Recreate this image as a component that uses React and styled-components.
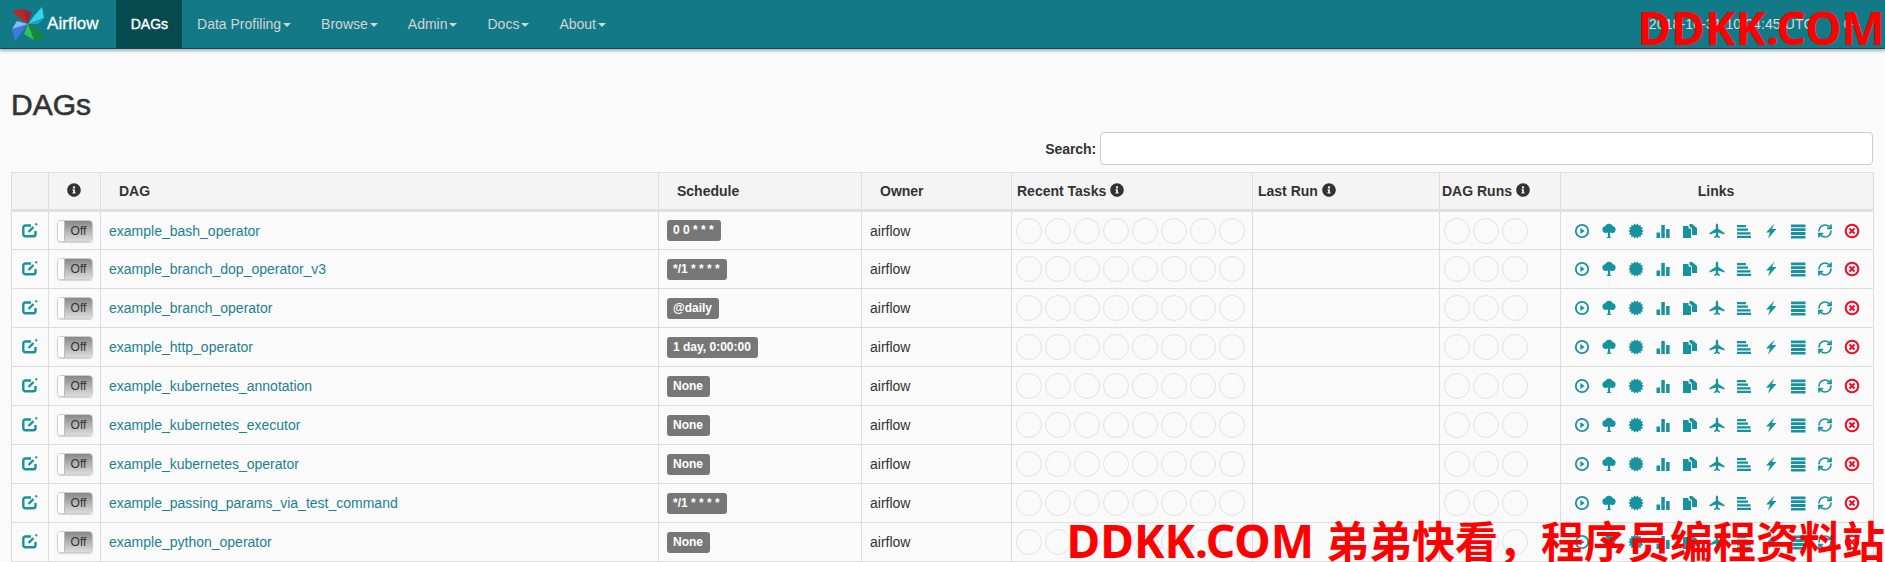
import React from 'react';
import styled, { createGlobalStyle } from 'styled-components';
import { FaInfoCircle } from 'react-icons/fa';
import { RefreshCw } from 'lucide-react';

const GlobalStyle = createGlobalStyle`
  html, body {
    margin: 0;
    height: 562px;
    overflow: hidden;
    background: #fafafa;
    font-family: "Liberation Sans", Arial, sans-serif;
    font-size: 14px;
    color: #333;
  }
`;

const Navbar = styled.nav`
  height: 48px;
  display: flex;
  align-items: stretch;
  background: #127a87;
  border-bottom: 1px solid #0d4f57;
  box-shadow: 0 2px 3px rgba(0, 0, 0, 0.3);
`;
const Brand = styled.a`
  display: flex;
  align-items: center;
  gap: 2px;
  padding: 0 17px 0 12px;
  color: #fff;
  font-size: 17px;
  letter-spacing: 0.1px;
  -webkit-text-stroke: 0.3px #fff;
`;
const NavItem = styled.a`
  display: flex;
  align-items: center;
  padding: 0 ${props => props.active ? 14 : 15}px 0 15px;
  color: ${props => props.active ? '#fff' : '#d4d4d4'};
  background: ${props => props.active ? '#06494f' : 'transparent'};
  -webkit-text-stroke: ${props => props.active ? '0.4px #fff' : '0'};
`;
const Caret = styled.span`
  width: 0;
  height: 0;
  margin-left: 2px;
  margin-top: 1px;
  border-top: 4px solid #d4d4d4;
  border-left: 4px solid transparent;
  border-right: 4px solid transparent;
`;
const Clock = styled.div`
  margin-left: auto;
  padding-right: 25px;
  display: flex;
  align-items: center;
  gap: 30px;
  color: #dcdcdc;
  font-size: 14px;
  letter-spacing: 0.1px;
`;

const Page = styled.main`
  padding: 0 12px 0 11px;
`;
const Title = styled.h2`
  margin: 39px 0 0;
  height: 44px;
  line-height: 33px;
  font-size: 30px;
  font-weight: normal;
  color: #333;
  -webkit-text-stroke: 0.6px #333;
`;
const SearchRow = styled.div`
  display: flex;
  justify-content: flex-end;
  align-items: center;
  gap: 4px;
  height: 33px;
  margin-bottom: 7px;
`;
const SearchLabel = styled.label`
  font-weight: bold;
  font-size: 14px;
  letter-spacing: -0.1px;
`;
const SearchInput = styled.input`
  box-sizing: border-box;
  width: 773px;
  height: 33px;
  background: #fff;
  border: 1px solid #ccc;
  border-radius: 4px;
`;

const Table = styled.table`
  width: 1862px;
  table-layout: fixed;
  border-collapse: collapse;
`;
const Th = styled.th`
  box-sizing: border-box;
  height: 38px;
  padding: 0 ${props => props.center ? 2 : 0}px 0 ${props => props.pad || 0}px;
  background: #f4f4f4;
  border: 1px solid #ddd;
  border-bottom: 3px solid #e0e0e0;
  text-align: ${props => props.center ? 'center' : 'left'};
  font-size: 14px;
  font-weight: bold;
  color: #333;
`;
const HeadInfo = styled(FaInfoCircle)`
  vertical-align: -1px;
  margin-left: ${props => props.alone ? 0 : 4}px;
  font-size: 14px;
`;
const Tr = styled.tr`
  height: 39px;
`;
const Td = styled.td`
  box-sizing: border-box;
  padding: 0 0 0 ${props => props.pad || 8}px;
  border: 1px solid #ddd;
  background: #fafafa;
  white-space: nowrap;
`;
const DagLink = styled.a`
  color: #1a8290;
`;
const Badge = styled.span`
  display: inline-block;
  padding: 0 7px 0 6px;
  height: 21px;
  line-height: 21px;
  background: #777;
  border-radius: 3px;
  color: #fff;
  font-size: 12px;
  font-weight: bold;
  white-space: pre;
`;
const Toggle = styled.span`
  box-sizing: border-box;
  display: flex;
  width: 36px;
  height: 22px;
  border: 1px solid #ccc;
  border-radius: 4px;
  overflow: hidden;
  font-size: 12px;
  box-shadow: 0 1px 1px rgba(0, 0, 0, 0.15);
`;
const ToggleHandle = styled.span`
  width: 6px;
  background: #fff;
  border-right: 1px solid #bbb;
`;
const ToggleLabel = styled.span`
  flex: 1;
  text-align: center;
  line-height: 20px;
  color: #333;
  background: linear-gradient(#888, #dcdcdc);
`;
const Circles = styled.div`
  display: flex;
  gap: 3px;
`;
const Circle = styled.span`
  box-sizing: border-box;
  width: 26px;
  height: 26px;
  border: 1.5px solid #e2e2e2;
  border-radius: 50%;
`;
const Links = styled.div`
  display: flex;
  gap: 11px;
  padding-left: 1px;
  color: #17929f;
`;
const Glyph = styled.svg`
  display: block;
  flex: none;
  width: 16px;
  height: 16px;
  fill: currentColor;
  color: ${props => props.danger ? '#f10a22' : 'inherit'};
`;
const Refresh = styled(RefreshCw)`
  display: block;
  flex: none;
`;
const EditIcon = styled.svg`
  display: block;
  width: 16px;
  height: 16px;
  margin: -2px 0 0 9px;
  fill: none;
  stroke: #17929f;
  stroke-width: 2.4;
`;

const Watermark = styled.div`
  position: absolute;
  color: #ff0000;
  font-family: "Noto Sans", "Noto Sans CJK SC", sans-serif;
  font-weight: bold;
  font-size: 46px;
  line-height: 1;
  white-space: nowrap;
  right: ${props => props.right}px;
  top: ${props => props.top}px;
`;
const WatermarkCjk = styled.span`
  font-size: 43px;
`;

// little spiky disc used by the graph link
const spikes = () => {
  const pts = [];
  for (let i = 0; i < 28; i++) {
    const r = i % 2 ? 6 : 7.8;
    const a = (i / 28) * Math.PI * 2;
    pts.push(`${(8 + r * Math.cos(a)).toFixed(2)},${(8 + r * Math.sin(a)).toFixed(2)}`);
  }
  return pts.join(' ');
};

const Logo = () => (
  <svg width="33" height="34" viewBox="0 0 33 34">
    <polygon points="0,4 10,2 16,17 9,12" fill="#c8231c" />
    <polygon points="10,2 20,5 16,17" fill="#8e2a3a" />
    <polygon points="30,0 32,11 16,17 22,9" fill="#34d3ee" />
    <polygon points="32,11 26,17 16,17" fill="#19a7c4" />
    <polygon points="33,31 22,33 16,17 24,21" fill="#128a3a" />
    <polygon points="22,33 12,27 16,17" fill="#2fc356" />
    <polygon points="3,34 0,22 16,17 10,25" fill="#3f78e0" />
    <polygon points="0,22 5,14 16,17" fill="#8db8f5" />
  </svg>
);

const LinkIcons = () => (
  <Links>
    <Glyph viewBox="0 0 16 16">
      <circle cx="8" cy="8" r="6.2" fill="none" stroke="currentColor" strokeWidth="1.8" />
      <path d="M6.4 5l4.2 3-4.2 3z" />
    </Glyph>
    <Glyph viewBox="0 0 16 16">
      <circle cx="8" cy="5" r="4.2" />
      <circle cx="4.8" cy="6.6" r="3.4" />
      <circle cx="11.2" cy="6.6" r="3.4" />
      <path d="M6.900 8h2.200v5.500l1.400 1.500h-5l1.400-1.500z" />
    </Glyph>
    <Glyph viewBox="0 0 16 16">
      <polygon points={spikes()} />
    </Glyph>
    <Glyph viewBox="0 0 16 16">
      <path d="M1.500 9.500h3.500V15H1.500zM6.300 2h3.500v13H6.300zM11.100 6h3.500v9h-3.500z" />
    </Glyph>
    <Glyph viewBox="0 0 16 16">
      <path d="M1 3h5.500v2.500H9V15H1zM10 1l5 4v7h-5V5.500L7.500 3.500V1z" />
      <path d="M7.200 3.800l1.500 1.400H7.200z" fill="#fff" />
    </Glyph>
    <Glyph viewBox="0 0 16 16">
      <path d="M8 .5c.8 0 1.200 1.200 1.200 2.500v2.700L15.500 10v1.500L9.200 9.500v3l1.800 1.500v1L8 14.300 5 15v-1l1.800-1.500v-3L.5 11.500V10l6.300-4.300V3C6.800 1.700 7.200.5 8 .5z" />
    </Glyph>
    <Glyph viewBox="0 0 16 16">
      <path d="M1 2h9v2.200H1zM1 5.600h11v2.200H1zM1 9.200h13.500v2.200H1zM1 12.800h14v2.200H1z" />
    </Glyph>
    <Glyph viewBox="0 0 16 16">
      <path d="M11.500.5L3 9.500h4L5 15.500l8.500-9.500H9z" />
    </Glyph>
    <Glyph viewBox="0 0 16 16">
      <path d="M1 1.500h14.500v2.800H1zM1 5.300h14.500v2.800H1zM1 9.100h14.500v2.800H1zM1 12.900h14.500v2.600H1z" />
    </Glyph>
    <Refresh size={16} strokeWidth={2.5} />
    <Glyph viewBox="0 0 16 16" danger="true">
      <circle cx="8" cy="8" r="6.300" fill="none" stroke="currentColor" strokeWidth="2" />
      <path d="M5.500 5.500l5 5M10.500 5.500l-5 5" stroke="currentColor" strokeWidth="1.900" fill="none" />
    </Glyph>
  </Links>
);

const DAGS = [
  ['example_bash_operator', '0 0 * * *'],
  ['example_branch_dop_operator_v3', '*/1 * * * *'],
  ['example_branch_operator', '@daily'],
  ['example_http_operator', '1 day, 0:00:00'],
  ['example_kubernetes_annotation', 'None'],
  ['example_kubernetes_executor', 'None'],
  ['example_kubernetes_operator', 'None'],
  ['example_passing_params_via_test_command', '*/1 * * * *'],
  ['example_python_operator', 'None'],
];

const NAV = ['Data Profiling', 'Browse', 'Admin', 'Docs', 'About'];
const COLS = [37, 52, 558, 203, 150, 241, 187, 121, 313];

const App = () => (
  <>
    <GlobalStyle />
    <Navbar>
      <Brand><Logo />Airflow</Brand>
      <NavItem active="true">DAGs</NavItem>
      {NAV.map(name => (
        <NavItem key={name}>{name}<Caret /></NavItem>
      ))}
      <Clock><span>2018-10-31 10:24:45 UTC</span><span>0+</span></Clock>
    </Navbar>
    <Page>
      <Title>DAGs</Title>
      <SearchRow>
        <SearchLabel>Search:</SearchLabel>
        <SearchInput />
      </SearchRow>
      <Table>
        <colgroup>
          {COLS.map((w, i) => <col key={i} width={w} />)}
        </colgroup>
        <thead>
          <tr>
            <Th />
            <Th center="true"><HeadInfo alone="true" /></Th>
            <Th pad={18}>DAG</Th>
            <Th pad={18}>Schedule</Th>
            <Th pad={18}>Owner</Th>
            <Th pad={5}>Recent Tasks<HeadInfo /></Th>
            <Th pad={5}>Last Run<HeadInfo /></Th>
            <Th pad={2}>DAG Runs<HeadInfo /></Th>
            <Th center="true">Links</Th>
          </tr>
        </thead>
        <tbody>
          {DAGS.map(([name, schedule]) => (
            <Tr key={name}>
              <Td pad={1}>
                <EditIcon viewBox="0 0 16 16">
                  <path d="M13.500 9v3.200a2 2 0 0 1-2 2H3.300a2 2 0 0 1-2-2V5.500a2 2 0 0 1 2-2H9" />
                  <path d="M6.500 10l5-5" />
                  <path d="M13.500 3l1.500-1.500" strokeWidth="2" />
                </EditIcon>
              </Td>
              <Td>
                <Toggle>
                  <ToggleHandle />
                  <ToggleLabel>Off</ToggleLabel>
                </Toggle>
              </Td>
              <Td><DagLink>{name}</DagLink></Td>
              <Td><Badge>{schedule}</Badge></Td>
              <Td>airflow</Td>
              <Td pad={4}>
                <Circles>{Array.from({ length: 8 }, (_, i) => <Circle key={i} />)}</Circles>
              </Td>
              <Td />
              <Td pad={4}>
                <Circles>{Array.from({ length: 3 }, (_, i) => <Circle key={i} />)}</Circles>
              </Td>
              <Td pad={12}><LinkIcons /></Td>
            </Tr>
          ))}
        </tbody>
      </Table>
    </Page>
    <Watermark right={0} top={4}>DDKK.COM</Watermark>
    <Watermark right={0} top={517}>DDKK.COM <WatermarkCjk>弟弟快看，程序员编程资料站</WatermarkCjk></Watermark>
  </>
);

export default App;
